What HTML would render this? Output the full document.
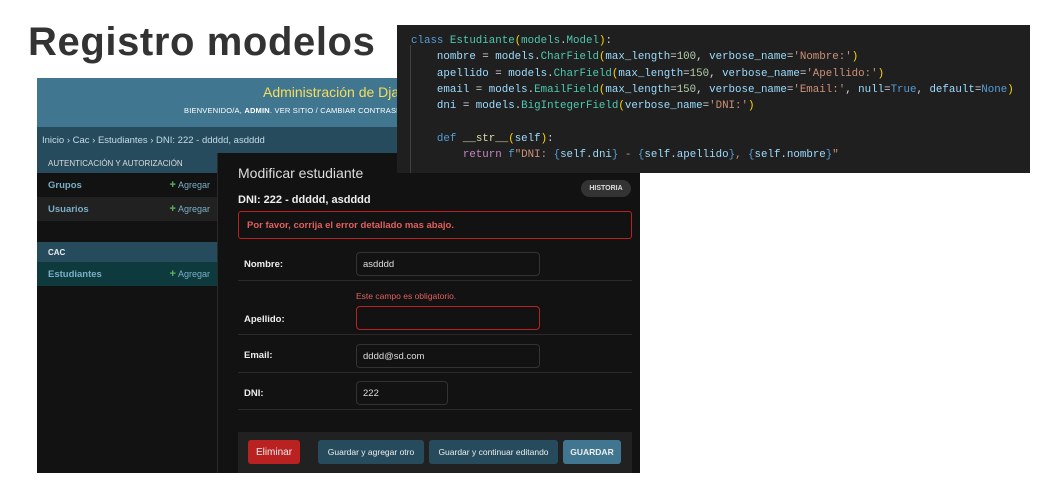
<!DOCTYPE html>
<html><head><meta charset="utf-8"><style>
*{margin:0;padding:0;box-sizing:border-box}
body{width:1042px;height:490px;background:#fff;position:relative;overflow:hidden;font-family:"Liberation Sans",sans-serif}
.a{position:absolute}
h1{position:absolute;left:28px;top:20px;font-size:40px;font-weight:bold;color:#333;letter-spacing:0.6px}
#dj{left:37px;top:78px;width:603px;height:395px;background:#121212}
.hdr{left:0;top:0;width:603px;height:49px;background:#417690}
.bc{left:0;top:49px;width:603px;height:26px;background:#264b5d;color:#c4dce8;font-size:9.5px;display:flex;align-items:center;padding-left:5px}
.side{left:0;top:75px;width:181px;height:320px;background:#121212;border-right:1px solid #2a2a2a}
.cap{background:#264b5d;color:#ddd;font-size:8px;height:20px;display:flex;align-items:center;padding-left:11px}
.row{height:24px;display:flex;align-items:center;font-size:9.5px;font-weight:bold;color:#79aec8;padding-left:11px;position:relative}
.row span{position:absolute;right:7px;font-weight:normal;color:#79aec8;font-size:9px}
.row span b{color:#5db65d;font-size:11px}
.lbl{position:absolute;left:207px;font-size:9.5px;font-weight:bold;color:#eee}
.inp{position:absolute;left:319px;height:24px;border:1px solid #333;border-radius:4px;color:#ddd;font-size:9.5px;display:flex;align-items:center;padding-left:6px;width:184px;background:#121212}
.sep{position:absolute;left:201px;width:394px;height:1px;background:#2a2a2a}
.btn{position:absolute;top:362px;height:24px;display:flex;align-items:center;justify-content:center;font-size:8.5px;color:#eee;border-radius:3px;background:#264b5d}
#code{left:397px;top:25px;width:633px;height:148px;background:#1f1f1f;font-family:"Liberation Mono",monospace;font-size:10.8px;color:#9cdcfe;white-space:pre;line-height:16.3px;padding:8px 0 0 14px}
.k{color:#569cd6}.t{color:#4ec9b0}.s{color:#ce9178}.n{color:#b5cea8}.f{color:#dcdcaa}.p{color:#ffd700}.r{color:#c586c0}.w{color:#d4d4d4}
</style></head><body>
<h1>Registro modelos</h1>
<div id="dj" class="a">
 <div class="a hdr">
  <div class="a" style="left:226px;top:6px;color:#f5dd5d;font-size:14px;white-space:nowrap">Administración de Django</div>
  <div class="a" style="left:147px;top:28px;color:#fff;font-size:7.5px;white-space:nowrap;letter-spacing:0.2px">BIENVENIDO/A, <b>ADMIN</b>. VER SITIO / CAMBIAR CONTRASEÑA</div>
 </div>
 <div class="a bc">Inicio › Cac › Estudiantes › DNI: 222 - ddddd, asdddd</div>
 <div class="a side">
  <div class="cap">AUTENTICACIÓN Y AUTORIZACIÓN</div>
  <div class="row">Grupos<span><b>+</b> Agregar</span></div>
  <div class="row" style="background:#212121">Usuarios<span><b>+</b> Agregar</span></div>
  <div style="height:21px"></div>
  <div class="cap" style="font-weight:bold;color:#eee">CAC</div>
  <div class="row" style="background:#0f3a3d">Estudiantes<span><b>+</b> Agregar</span></div>
 </div>
 <div class="a" style="left:201px;top:87px;color:#ddd;font-size:14px">Modificar estudiante</div>
 <div class="a" style="left:544px;top:102px;width:50px;height:17px;border-radius:9px;background:#333;color:#ddd;font-size:7px;font-weight:bold;display:flex;align-items:center;justify-content:center">HISTORIA</div>
 <div class="a" style="left:201px;top:116px;color:#eee;font-size:11px;font-weight:bold">DNI: 222 - ddddd, asdddd</div>
 <div class="a" style="left:201px;top:133px;width:394px;height:28px;border:1px solid #ba2121;border-radius:3px;color:#e35f5f;font-size:9.5px;font-weight:bold;display:flex;align-items:center;padding-left:8px">Por favor, corrija el error detallado mas abajo.</div>
 <div class="lbl" style="top:181px">Nombre:</div><div class="inp" style="top:174px">asdddd</div>
 <div class="sep" style="top:202px"></div>
 <div class="a" style="left:319px;top:213px;color:#e35f5f;font-size:8.5px">Este campo es obligatorio.</div>
 <div class="lbl" style="top:236px">Apellido:</div><div class="inp" style="top:228px;border-color:#ba2121"></div>
 <div class="sep" style="top:256px"></div>
 <div class="lbl" style="top:272px">Email:</div><div class="inp" style="top:266px">dddd@sd.com</div>
 <div class="sep" style="top:294px"></div>
 <div class="lbl" style="top:310px">DNI:</div><div class="inp" style="top:303px;width:92px">222</div>
 <div class="sep" style="top:331px"></div>
 <div class="a" style="left:201px;top:354px;width:394px;height:41px;background:#212121"></div>
 <div class="btn" style="left:211px;width:52px;background:#ba2121;font-size:10px">Eliminar</div>
 <div class="btn" style="left:281px;width:106px">Guardar y agregar otro</div>
 <div class="btn" style="left:392px;width:129px">Guardar y continuar editando</div>
 <div class="btn" style="left:526px;width:58px;background:#417690;font-weight:bold">GUARDAR</div>
</div>
<div id="code" class="a"><span class="k">class</span> <span class="t">Estudiante</span><span class="p">(</span><span class="t">models</span><span class="w">.</span><span class="t">Model</span><span class="p">)</span><span class="w">:</span>
    nombre <span class="w">=</span> models<span class="w">.</span><span class="t">CharField</span><span class="p">(</span>max_length<span class="w">=</span><span class="n">100</span><span class="w">,</span> verbose_name<span class="w">=</span><span class="s">'Nombre:'</span><span class="p">)</span>
    apellido <span class="w">=</span> models<span class="w">.</span><span class="t">CharField</span><span class="p">(</span>max_length<span class="w">=</span><span class="n">150</span><span class="w">,</span> verbose_name<span class="w">=</span><span class="s">'Apellido:'</span><span class="p">)</span>
    email <span class="w">=</span> models<span class="w">.</span><span class="t">EmailField</span><span class="p">(</span>max_length<span class="w">=</span><span class="n">150</span><span class="w">,</span> verbose_name<span class="w">=</span><span class="s">'Email:'</span><span class="w">,</span> null<span class="w">=</span><span class="k">True</span><span class="w">,</span> default<span class="w">=</span><span class="k">None</span><span class="p">)</span>
    dni <span class="w">=</span> models<span class="w">.</span><span class="t">BigIntegerField</span><span class="p">(</span>verbose_name<span class="w">=</span><span class="s">'DNI:'</span><span class="p">)</span>

    <span class="k">def</span> <span class="f">__str__</span><span class="p">(</span>self<span class="p">)</span><span class="w">:</span>
        <span class="r">return</span> <span class="k">f</span><span class="s">"DNI: </span><span class="k">{</span>self.dni<span class="k">}</span><span class="s"> - </span><span class="k">{</span>self.apellido<span class="k">}</span><span class="s">, </span><span class="k">{</span>self.nombre<span class="k">}</span><span class="s">"</span></div>
<div class="a" style="left:410px;top:45px;width:1px;height:128px;background:#404040"></div>
</body></html>
